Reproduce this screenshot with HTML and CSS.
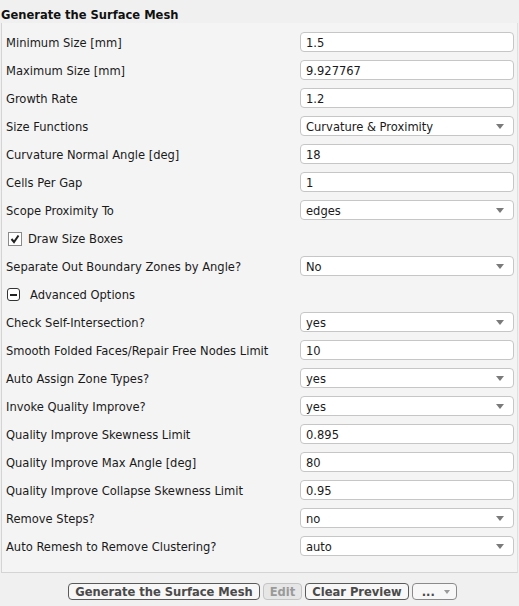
FILE: index.html
```
<!DOCTYPE html>
<html>
<head>
	<title>Generate the Surface Mesh</title>
	<link rel="stylesheet" href="styles.css">
</head>
<body>
	<h1 class="title">Generate the Surface Mesh</h1>
	<div class="panel">
		<div class="row"><label>Minimum Size [mm]</label><div class="field">1.5</div></div>
		<div class="row"><label>Maximum Size [mm]</label><div class="field">9.927767</div></div>
		<div class="row"><label>Growth Rate</label><div class="field">1.2</div></div>
		<div class="row"><label>Size Functions</label><div class="field select">Curvature &amp; Proximity</div></div>
		<div class="row"><label>Curvature Normal Angle [deg]</label><div class="field">18</div></div>
		<div class="row"><label>Cells Per Gap</label><div class="field">1</div></div>
		<div class="row"><label>Scope Proximity To</label><div class="field select">edges</div></div>
		<div class="row">
			<label class="check">
				<span class="box"><svg width="10" height="10" viewBox="0 0 10 10"><path d="M1.5 5 L4 8 L8.5 1.5" fill="none" stroke="#222" stroke-width="2"/></svg></span>
				Draw Size Boxes
			</label>
		</div>
		<div class="row"><label>Separate Out Boundary Zones by Angle?</label><div class="field select">No</div></div>
		<div class="row">
			<label class="check expander">
				<span class="toggle"></span>
				Advanced Options
			</label>
		</div>
		<div class="row"><label>Check Self-Intersection?</label><div class="field select">yes</div></div>
		<div class="row"><label>Smooth Folded Faces/Repair Free Nodes Limit</label><div class="field">10</div></div>
		<div class="row"><label>Auto Assign Zone Types?</label><div class="field select">yes</div></div>
		<div class="row"><label>Invoke Quality Improve?</label><div class="field select">yes</div></div>
		<div class="row"><label>Quality Improve Skewness Limit</label><div class="field">0.895</div></div>
		<div class="row"><label>Quality Improve Max Angle [deg]</label><div class="field">80</div></div>
		<div class="row"><label>Quality Improve Collapse Skewness Limit</label><div class="field">0.95</div></div>
		<div class="row"><label>Remove Steps?</label><div class="field select">no</div></div>
		<div class="row"><label>Auto Remesh to Remove Clustering?</label><div class="field select">auto</div></div>
	</div>
	<div class="actions">
		<button>Generate the Surface Mesh</button>
		<button disabled>Edit</button>
		<button>Clear Preview</button>
		<button class="more">...</button>
	</div>
</body>
</html>
```
FILE: styles.css
```
body {
	margin: 0;
	padding: 0;
	font-family: "DejaVu Sans Condensed", "DejaVu Sans", sans-serif;
	font-size: 12.8px;
	color: #1a1a1a;
	background-color: #f0f0f0;
	width: 519px;
	height: 606px;
	overflow: hidden;
}
.title {
	margin: 0;
	padding: 7px 0 0 1px;
	height: 23px;
	box-sizing: border-box;
	font-size: 12.8px;
	font-weight: bold;
	line-height: 15px;
	color: #111;
}
.panel {
	margin-left: 1px;
	width: 517px;
	padding-bottom: 12px;
	background-color: #f4f4f4;
	border-left: 1px solid #d4d4d4;
	border-right: 1px solid #e0e0e0;
	border-bottom: 1px solid #d4d4d4;
	box-sizing: border-box;
	padding-top: 5px;
}
.row {
	display: flex;
	align-items: center;
	justify-content: space-between;
	height: 28px;
	padding-left: 4px;
	padding-right: 3px;
}
.row label {
	display: flex;
	align-items: center;
	padding-top: 1px;
}
.field {
	position: relative;
	width: 214px;
	height: 20px;
	box-sizing: border-box;
	padding-left: 5px;
	line-height: 19px;
	background-color: white;
	border: 1px solid #c6c6c6;
	border-radius: 4px;
}
.select:after {
	content: "";
	position: absolute;
	right: 9px;
	top: 7px;
	border-left: 4px solid transparent;
	border-right: 4px solid transparent;
	border-top: 5px solid #7a7a7a;
}
.check {
	gap: 6px;
}
.check.expander {
	gap: 10px;
}
.box {
	display: flex;
	align-items: center;
	justify-content: center;
	margin-left: 2px;
	width: 12px;
	height: 12px;
	background: white;
	border: 1px solid #8a8a8a;
}
.toggle {
	position: relative;
	margin-left: 1px;
	width: 11px;
	height: 11px;
	border: 1.5px solid #333;
	border-radius: 3px;
	background: white;
}
.toggle:after {
	content: "";
	position: absolute;
	left: 2px;
	right: 2px;
	top: 4.5px;
	height: 2px;
	background: #222;
}
.actions {
	display: flex;
	justify-content: center;
	gap: 3px;
	padding-top: 10px;
	padding-left: 6px;
}
button {
	height: 17px;
	padding: 0 6px;
	font-family: inherit;
	font-size: 12.8px;
	font-weight: bold;
	line-height: 14px;
	color: #4a4a4a;
	background-color: #f7f7f7;
	border: 1px solid #5a5a5a;
	border-radius: 4px;
}
button[disabled] {
	color: #9a9a9a;
	background-color: #e6e6e6;
	border-color: #c4c4c4;
}
.more {
	position: relative;
	width: 45px;
	text-align: left;
	padding-left: 9px;
	border-color: #8a8a8a;
}
.more:after {
	content: "";
	position: absolute;
	right: 6px;
	top: 6px;
	border-left: 3px solid transparent;
	border-right: 3px solid transparent;
	border-top: 4px solid #9a9a9a;
}
```
